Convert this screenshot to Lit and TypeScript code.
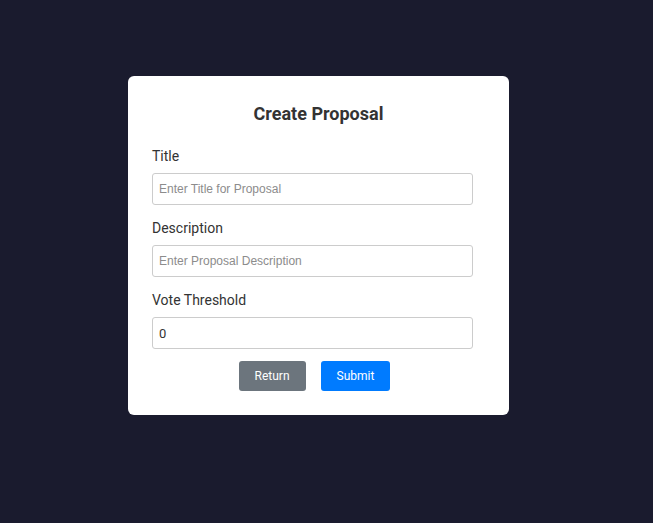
import { LitElement, html, css } from "lit";
import { customElement, state } from "lit/decorators.js";

@customElement("app-root")
export class AppRoot extends LitElement {
  @state() private threshold = "0";

  static styles = css`
    :host {
      display: block;
      font-family: Roboto, "Liberation Sans", sans-serif;
      color: #333;
    }
    * {
      box-sizing: border-box;
    }
    .page {
      display: flex;
      align-items: center;
      justify-content: center;
      min-height: 100vh;
      padding: 0 16px 32px 0;
      background: #1a1b2e;
    }
    .card {
      width: 100%;
      max-width: 381px;
      padding: 24px;
      background: #fff;
      border-radius: 6px;
    }
    .heading {
      margin: 0 0 20px;
      font-size: 18px;
      line-height: 28px;
      font-weight: 700;
      text-align: center;
    }
    .fields {
      display: flex;
      flex-direction: column;
      gap: 15px;
      padding-right: 12px;
    }
    .field {
      display: flex;
      flex-direction: column;
      gap: 8px;
    }
    .label {
      font-size: 14px;
      line-height: 17px;
    }
    .input {
      width: 100%;
      height: 32px;
      margin: 0;
      padding: 0 6px;
      border: 1px solid #ccc;
      border-radius: 3px;
      background: #fff;
      color: #333;
      font-family: "Liberation Sans", Arial, sans-serif;
      font-size: 12px;
      outline: none;
    }
    .input::placeholder {
      color: #8c8c8c;
    }
    .number {
      font-family: Roboto, sans-serif;
      font-size: 13px;
      appearance: textfield;
    }
    .actions {
      display: flex;
      justify-content: center;
      gap: 15px;
      margin-top: 12px;
      padding-right: 8px;
    }
    .button {
      height: 30px;
      padding: 0 16px;
      border: 0;
      border-radius: 3px;
      color: #fff;
      font-family: inherit;
      font-size: 12px;
      cursor: pointer;
    }
    .return {
      background: #6c757d;
    }
    .submit {
      background: #007bff;
    }
  `;

  render() {
    return html`
      <main class="page">
        <form class="card" @submit=${(e: Event) => e.preventDefault()}>
          <h1 class="heading">Create Proposal</h1>
          <div class="fields">
            <div class="field">
              <label class="label" for="title">Title</label>
              <input class="input" id="title" type="text" placeholder="Enter Title for Proposal" />
            </div>
            <div class="field">
              <label class="label" for="description">Description</label>
              <input class="input" id="description" type="text" placeholder="Enter Proposal Description" />
            </div>
            <div class="field">
              <label class="label" for="threshold">Vote Threshold</label>
              <input
                class="input number"
                id="threshold"
                type="number"
                .value=${this.threshold}
                @input=${(e: Event) => (this.threshold = (e.target as HTMLInputElement).value)}
              />
            </div>
          </div>
          <div class="actions">
            <button class="button return" type="button">Return</button>
            <button class="button submit" type="submit">Submit</button>
          </div>
        </form>
      </main>
    `;
  }
}
